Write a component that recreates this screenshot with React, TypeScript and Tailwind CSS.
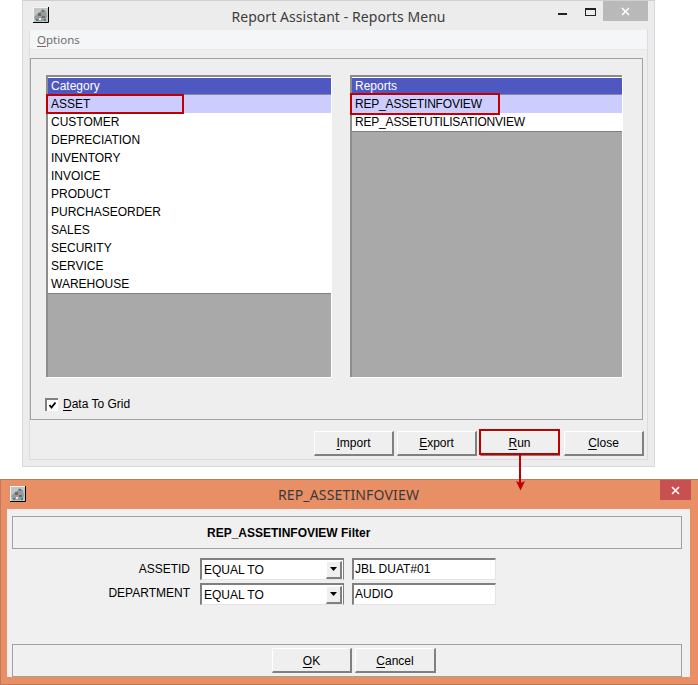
import React from "react";

const arial = "font-['Liberation_Sans',Arial,sans-serif]";
const segoe = "font-['Noto_Sans','Open_Sans',sans-serif]";

function AppIcon({ className }: { className: string }) {
  return (
    <svg viewBox="0 0 16 16" width="16" height="16" className={className}>
      <rect x="0" y="0" width="16" height="16" fill="#c4c4c4" />
      <path d="M0 15.5H15.5V0" stroke="#000" fill="none" />
      <path d="M0 .5H15M.5 0V15" stroke="#f4f4f4" />
      <path d="M1 10l3-3 3-2 2-3 4 2 1 6-2 4H3z" fill="#9a9a9a" />
      <path d="M5 6h3v3H5zM9 9h3v2H9z" fill="#6a6a6a" />
      <path d="M9 3h2v2H9zM3 12h2v2H3zM11 12h2v2h-2z" fill="#2f8f8f" />
      <path d="M6 11h2v2H6z" fill="#eeeeee" />
    </svg>
  );
}

function Key({ children }: { children: string }) {
  return <span className="underline underline-offset-2 decoration-1">{children}</span>;
}

function Button({ k, rest, w = "w-[80px]", low }: { k: string; rest: string; w?: string; low?: boolean }) {
  return (
    <div className={`${w} h-[25px] ${low ? "pt-[1px]" : ""} flex items-center justify-center bg-[#efefef] border-t border-l border-t-white border-l-white border-r-2 border-b-2 border-r-[#808080] border-b-[#808080] text-[12px] text-black ${arial}`}>
      <span><Key>{k}</Key>{rest}</span>
    </div>
  );
}

function ListBox({ title, rows, w, marker, tight }: { title: string; rows: string[]; w: string; marker: string; tight?: boolean }) {
  return (
    <div className={`${w} h-[302px] flex flex-col border-t-2 border-l-2 border-[#8c8c8c] bg-[#a9a9a9] relative ${arial} text-[12px] shadow-[1px_1px_0_#ffffff]`}>
      <div className="h-[18px] shrink-0 bg-[#4f57c0] text-white pl-[3px] leading-[17px] border-b border-[#8c8c8c] border-t border-t-white">{title}</div>
      {rows.map((r, i) => (
        <div key={r} className={`h-[18px] shrink-0 pl-[3px] leading-[18px] text-black ${tight ? "tracking-[-0.19px]" : ""} ${i === 0 ? "bg-[#ccccff]" : "bg-white"}`}>{r}</div>
      ))}
      <div className="border-t border-[#808080]" />
      <div className={`absolute border-2 border-[#c00000] ${marker}`} />
    </div>
  );
}

function Combo() {
  return (
    <div className={`w-[144px] h-[22px] flex items-center bg-white border-t-2 border-l-2 border-r border-[#808080] border-b border-b-[#e4e4e4] ${arial} text-[12px] text-black`}>
      <span className="flex-1 pl-[2px] pt-[1px]">EQUAL TO</span>
      <div className="w-[16px] h-[18px] mr-[1px] flex items-center justify-center bg-[#efefef] border-t border-l border-t-white border-l-white border-r-2 border-b-2 border-r-[#808080] border-b-[#808080]">
        <svg width="7" height="4" viewBox="0 0 7 4"><path d="M0 0h7L3.5 4z" fill="#000" /></svg>
      </div>
    </div>
  );
}

function Field({ value }: { value: string }) {
  return (
    <div className={`w-[144px] h-[22px] bg-white border-t-2 border-l-2 border-t-[#808080] border-l-[#808080] border-r border-b border-r-[#e4e4e4] border-b-[#e4e4e4] pl-[1px] leading-[18px] ${arial} text-[12px] text-black`}>
      {value}
    </div>
  );
}

export default function App() {
  const cats = ["ASSET", "CUSTOMER", "DEPRECIATION", "INVENTORY", "INVOICE", "PRODUCT", "PURCHASEORDER", "SALES", "SECURITY", "SERVICE", "WAREHOUSE"];
  const reps = ["REP_ASSETINFOVIEW", "REP_ASSETUTILISATIONVIEW"];
  return (
    <div className="relative w-[698px] h-[685px] bg-white overflow-hidden">
      {/* Top window */}
      <div className="ml-[22px] w-[633px] h-[467px] border border-[#d9d9d9] border-t-[#d0d0d0] bg-[#ececec] flex flex-col">
        <div className="h-[29px] shrink-0 relative flex items-center justify-center">
          <AppIcon className="absolute left-[10px] top-[6px]" />
          <span className={`${segoe} text-[14px] tracking-[0.07px] text-[#3d3d3d] pt-[2px]`}>Report Assistant - Reports Menu</span>
          <div className="absolute left-[535px] top-[12px] w-[9px] h-[2px] bg-[#222222]" />
          <div className="absolute left-[562px] top-[7px] w-[11px] h-[8px] border border-t-2 border-[#222222]" />
          <div className="absolute left-[580px] top-0 w-[45px] h-[20px] bg-[#b9b9b9] flex items-center justify-center">
            <svg width="9" height="9" viewBox="0 0 9 9"><path d="M1 1l7 7M8 1L1 8" stroke="#fff" strokeWidth="1.6" /></svg>
          </div>
        </div>
        <div className="ml-[6px] w-[619px] h-[430px] shrink-0 border-l border-r border-b border-[#dcdcdc] bg-[#eeeeee] flex flex-col">
          <div className={`h-[20px] shrink-0 bg-[#f5f6f7] border-b border-[#e8e8e8] pl-[7px] ${segoe} text-[11.5px] leading-[20px] text-[#6d6d6d]`}>
            <Key>O</Key>ptions
          </div>
          <div className="mt-[8px] w-[613px] h-[362px] shrink-0 border border-[#a0a0a0] pl-[15px] pt-[16px] flex flex-col">
            <div className="flex gap-[19px]">
              <ListBox title="Category" rows={cats} w="w-[285px]" marker="left-[-2px] top-[17px] w-[138px] h-[20px]" />
              <ListBox title="Reports" rows={reps} w="w-[272px]" marker="left-[-2px] top-[16px] w-[150px] h-[22px]" tight />
            </div>
            <div className={`mt-[18px] flex items-center ${arial} text-[12px] text-black`}>
              <div className="w-[13px] h-[13px] bg-white border-t-2 border-l-2 border-[#808080] flex items-center justify-center -ml-[1px]">
                <svg width="9" height="9" viewBox="0 0 9 9"><path d="M1.5 4l2 2.5L7.5 1.5" stroke="#000" strokeWidth="1.8" fill="none" /></svg>
              </div>
              <span className="ml-[5px]"><Key>D</Key>ata To Grid</span>
            </div>
          </div>
          <div className="mt-[11px] flex justify-end gap-[3px] pr-[3px]">
            <Button k="I" rest="mport" />
            <Button k="E" rest="xport" />
            <div className="mr-[1px]"><Button k="R" rest="un" /></div>
            <Button k="C" rest="lose" />
          </div>
        </div>
      </div>

      {/* Bottom window */}
      <div className="mt-[12px] w-[698px] h-[206px] border border-[#c0795a] border-r-0 bg-[#e98f66] flex flex-col">
        <div className="h-[29px] shrink-0 relative flex items-center justify-center">
          <AppIcon className="absolute left-[9px] top-[6px]" />
          <span className={`${segoe} text-[14px] tracking-[0.16px] text-[#3a3a3a] pr-[2px]`}>REP_ASSETINFOVIEW</span>
          <div className="absolute left-[659px] top-0 w-[31px] h-[20px] bg-[#c75050] flex items-center justify-center">
            <svg width="9" height="9" viewBox="0 0 9 9"><path d="M1 1l7 7M8 1L1 8" stroke="#fff" strokeWidth="1.6" /></svg>
          </div>
        </div>
        <div className="ml-[6px] w-[683px] h-[168px] shrink-0 bg-[#f0f0f0] pl-[5px] pt-[7px] flex flex-col">
          <div className={`w-[670px] h-[33px] shrink-0 border border-[#a0a0a0] pl-[194px] leading-[33px] ${arial} text-[12px] font-bold text-black`}>
            REP_ASSETINFOVIEW Filter
          </div>
          <div className={`mt-[9px] grid grid-cols-[180px_144px_144px] gap-y-[3px] gap-x-[8px] ${arial} text-[12px] text-black`}>
            <div className="text-right pt-[2px] pr-[2px]">ASSETID</div>
            <Combo />
            <Field value="JBL DUAT#01" />
            <div className="text-right pt-[1px] pr-[2px]">DEPARTMENT</div>
            <Combo />
            <Field value="AUDIO" />
          </div>
          <div className="mt-[39px] w-[670px] h-[33px] shrink-0 border border-[#a0a0a0] pl-[259px] pt-[3px] flex gap-[3px]">
            <Button k="O" rest="K" low />
            <Button k="C" rest="ancel" w="w-[81px]" low />
          </div>
        </div>
      </div>

      {/* Annotations */}
      <div className="absolute left-[479px] top-[429px] w-[81px] h-[26px] border-2 border-[#c00000]" />
      <div className="absolute left-[519px] top-[455px] w-[2px] h-[29px] bg-[#c00000]" />
      <svg className="absolute left-[516px] top-[481px]" width="9" height="10" viewBox="0 0 9 10">
        <path d="M0 0l4.5 2L9 0 4.5 9.5z" fill="#c00000" />
      </svg>
    </div>
  );
}
